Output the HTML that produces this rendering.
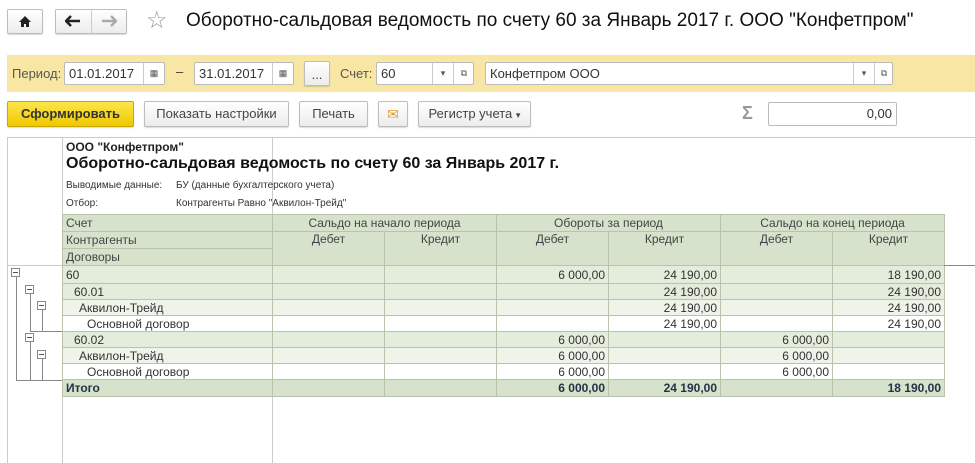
<!DOCTYPE html>
<html><head><meta charset="utf-8"><style>
*{box-sizing:border-box;margin:0;padding:0}
body{width:975px;height:463px;background:#fff;font-family:"Liberation Sans",Arial,sans-serif;position:relative;overflow:hidden;color:#333}
.a{position:absolute}
.btn{position:absolute;border:1px solid #bdbdbd;border-radius:2px;background:linear-gradient(#fff,#ececec);font-size:13px;color:#444;text-align:center;line-height:24px;box-shadow:0 1px 1px rgba(0,0,0,.15)}
.inp{position:absolute;border:1px solid #bbb;background:#fff;height:23px;font-size:13px;line-height:21px;padding-left:4px;color:#333;border-radius:2px}
.sb{position:absolute;top:0;height:21px;border-left:1px solid #ccc;font-size:9px;text-align:center;line-height:21px;color:#555}
table{border-collapse:collapse;position:absolute;left:62px;top:214px;font-size:12px;table-layout:fixed}
td{border:1px solid #b8c2ad;height:16px;padding:0 3px;white-space:nowrap;line-height:14px}
.h td{background:#d6e2cc;color:#444;height:17px}
.l1 td{background:#e4ecdb}
.l3 td{background:#eff4eb}
.l4 td{background:#fff}
.t td{background:#d6e2cc;font-weight:bold;color:#234}
.r{text-align:right}
.mb{position:absolute;width:9px;height:9px;border:1px solid #888;background:#fff}
.mb:after{content:"";position:absolute;left:1px;top:3px;width:5px;height:1px;background:#555}
.vl{position:absolute;width:1px;background:#888}
.hl{position:absolute;height:1px;background:#888}
</style></head><body>
<div class="btn" style="left:7px;top:9px;width:36px;height:25px"><svg width="14" height="13" viewBox="0 0 14 13" style="margin-top:5px"><path d="M7 1 L1 7 H3 V12 H6 V9 H8 V12 H11 V7 H13 Z" fill="#222"/></svg></div>
<div class="btn" style="left:55px;top:9px;width:72px;height:25px"></div>
<div class="a" style="left:91px;top:10px;width:1px;height:23px;background:#ccc"></div>
<svg class="a" style="left:65px;top:15px" width="16" height="12" viewBox="0 0 16 12"><path d="M1 6 H15 M6 1 L1 6 L6 11" stroke="#222" stroke-width="2.5" fill="none"/></svg>
<svg class="a" style="left:101px;top:15px" width="16" height="12" viewBox="0 0 16 12"><path d="M1 6 H15 M10 1 L15 6 L10 11" stroke="#aaa" stroke-width="2.5" fill="none"/></svg>
<div class="a" style="left:146px;top:6px;font-size:24px;color:#999">&#9734;</div>
<div class="a" style="left:186px;top:10px;font-size:19px;color:#111">Оборотно-сальдовая ведомость по счету 60 за Январь 2017 г. ООО "Конфетпром"</div>

<div class="a" style="left:7px;top:55px;width:968px;height:37px;background:#f8e7a4"></div>
<div class="a" style="left:12px;top:66px;font-size:13px;color:#555">Период:</div>
<div class="inp" style="left:64px;top:62px;width:101px">01.01.2017<div class="sb" style="left:78px;width:21px">&#9638;</div></div>
<div class="a" style="left:176px;top:64px;font-size:13px">–</div>
<div class="inp" style="left:194px;top:62px;width:100px">31.01.2017<div class="sb" style="left:77px;width:21px">&#9638;</div></div>
<div class="btn" style="left:304px;top:61px;width:26px;height:25px;line-height:26px">...</div>
<div class="a" style="left:340px;top:66px;font-size:13px;color:#555">Счет:</div>
<div class="inp" style="left:376px;top:62px;width:98px">60<div class="sb" style="left:55px;width:21px">&#9662;</div><div class="sb" style="left:76px;width:21px">&#10697;</div></div>
<div class="inp" style="left:485px;top:62px;width:408px">Конфетпром ООО<div class="sb" style="left:367px;width:21px">&#9662;</div><div class="sb" style="left:388px;width:19px">&#10697;</div></div>

<div class="btn" style="left:7px;top:101px;width:127px;height:26px;background:linear-gradient(#fbe64a,#f0c800);border-color:#c9a800;font-weight:bold;color:#333">Сформировать</div>
<div class="btn" style="left:144px;top:101px;width:145px;height:26px">Показать настройки</div>
<div class="btn" style="left:299px;top:101px;width:69px;height:26px">Печать</div>
<div class="btn" style="left:378px;top:101px;width:30px;height:26px;color:#e0a030;font-size:14px">&#9993;</div>
<div class="btn" style="left:418px;top:101px;width:113px;height:26px">Регистр учета <span style="font-size:9px">&#9662;</span></div>
<div class="a" style="left:742px;top:103px;font-size:18px;color:#999;font-weight:bold">Σ</div>
<div class="inp" style="left:768px;top:102px;width:129px;height:24px;text-align:right;padding-right:4px;line-height:22px">0,00</div>

<div class="a" style="left:7px;top:137px;width:968px;height:1px;background:#ccc"></div>
<div class="a" style="left:7px;top:137px;width:1px;height:326px;background:#ccc"></div>
<div class="a" style="left:62px;top:137px;width:1px;height:326px;background:#ccc"></div>
<div class="a" style="left:272px;top:137px;width:1px;height:326px;background:#ccc"></div>
<div class="a" style="left:7px;top:265px;width:968px;height:1px;background:#ccc"></div>
<div class="a" style="left:66px;top:140px;font-size:12px;font-weight:bold;color:#222">ООО "Конфетпром"</div>
<div class="a" style="left:66px;top:155px;font-size:16px;font-weight:bold;color:#111">Оборотно-сальдовая ведомость по счету 60 за Январь 2017 г.</div>
<div class="a" style="left:66px;top:180px;font-size:10px;color:#333">Выводимые данные:</div>
<div class="a" style="left:176px;top:180px;font-size:10px;color:#333">БУ (данные бухгалтерского учета)</div>
<div class="a" style="left:66px;top:198px;font-size:10px;color:#333">Отбор:</div>
<div class="a" style="left:176px;top:198px;font-size:10px;color:#333">Контрагенты Равно "Аквилон-Трейд"</div>

<table>
<colgroup><col style="width:210px"><col style="width:112px"><col style="width:112px"><col style="width:112px"><col style="width:112px"><col style="width:112px"><col style="width:112px"></colgroup>
<tr class="h"><td>Счет</td><td colspan="2" style="text-align:center">Сальдо на начало периода</td><td colspan="2" style="text-align:center">Обороты за период</td><td colspan="2" style="text-align:center">Сальдо на конец периода</td></tr>
<tr class="h"><td>Контрагенты</td><td rowspan="2" style="text-align:center;vertical-align:top">Дебет</td><td rowspan="2" style="text-align:center;vertical-align:top">Кредит</td><td rowspan="2" style="text-align:center;vertical-align:top">Дебет</td><td rowspan="2" style="text-align:center;vertical-align:top">Кредит</td><td rowspan="2" style="text-align:center;vertical-align:top">Дебет</td><td rowspan="2" style="text-align:center;vertical-align:top">Кредит</td></tr>
<tr class="h"><td>Договоры</td></tr>
<tr class="l1"><td style="height:18px">60</td><td></td><td></td><td class="r">6 000,00</td><td class="r">24 190,00</td><td></td><td class="r">18 190,00</td></tr>
<tr class="l1"><td style="padding-left:11px">60.01</td><td></td><td></td><td></td><td class="r">24 190,00</td><td></td><td class="r">24 190,00</td></tr>
<tr class="l3"><td style="padding-left:16px">Аквилон-Трейд</td><td></td><td></td><td></td><td class="r">24 190,00</td><td></td><td class="r">24 190,00</td></tr>
<tr class="l4"><td style="padding-left:24px">Основной договор</td><td></td><td></td><td></td><td class="r">24 190,00</td><td></td><td class="r">24 190,00</td></tr>
<tr class="l1"><td style="padding-left:11px">60.02</td><td></td><td></td><td class="r">6 000,00</td><td></td><td class="r">6 000,00</td><td></td></tr>
<tr class="l3"><td style="padding-left:16px">Аквилон-Трейд</td><td></td><td></td><td class="r">6 000,00</td><td></td><td class="r">6 000,00</td><td></td></tr>
<tr class="l4"><td style="padding-left:24px">Основной договор</td><td></td><td></td><td class="r">6 000,00</td><td></td><td class="r">6 000,00</td><td></td></tr>
<tr class="t"><td style="height:17px">Итого</td><td></td><td></td><td class="r">6 000,00</td><td class="r">24 190,00</td><td></td><td class="r">18 190,00</td></tr>
</table>
<div class="a" style="left:944px;top:265px;width:31px;height:1px;background:#888"></div>

<div class="vl" style="left:16px;top:277px;height:103px"></div>
<div class="hl" style="left:16px;top:380px;width:46px"></div>
<div class="vl" style="left:30px;top:293px;height:38px"></div>
<div class="hl" style="left:30px;top:331px;width:32px"></div>
<div class="vl" style="left:30px;top:341px;height:39px"></div>
<div class="vl" style="left:42px;top:309px;height:22px"></div>
<div class="vl" style="left:42px;top:358px;height:22px"></div>
<div class="mb" style="left:11px;top:268px"></div>
<div class="mb" style="left:25px;top:285px"></div>
<div class="mb" style="left:37px;top:301px"></div>
<div class="mb" style="left:25px;top:333px"></div>
<div class="mb" style="left:37px;top:350px"></div>
</body></html>
